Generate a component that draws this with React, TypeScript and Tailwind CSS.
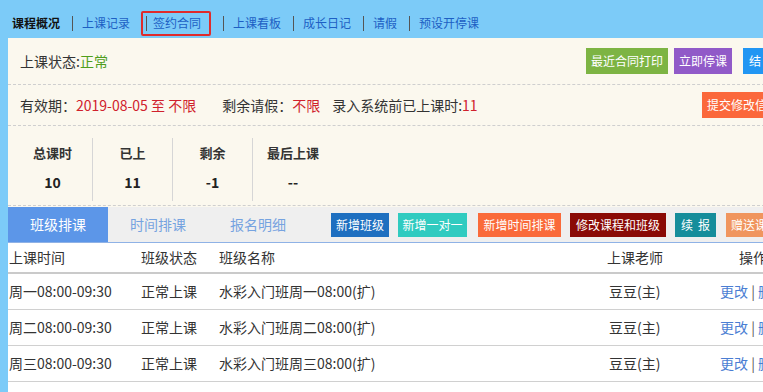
const navItems = ["上课记录", "签约合同", "上课看板", "成长日记", "请假", "预设开停课"];

const stats = [
  { label: "总课时", value: "10" },
  { label: "已上", value: "11" },
  { label: "剩余", value: "-1" },
  { label: "最后上课", value: "--" },
];

const rows = [
  { time: "周一08:00-09:30", name: "水彩入门班周一08:00(扩)" },
  { time: "周二08:00-09:30", name: "水彩入门班周二08:00(扩)" },
  { time: "周三08:00-09:30", name: "水彩入门班周三08:00(扩)" },
];

function Sep() {
  return <span className="w-px h-[15px] bg-[#555]" />;
}

export default function App() {
  return (
    <div
      className="w-[763px] h-[392px] overflow-hidden bg-[#7ccbf8] text-[#333]"
      style={{ fontFamily: '"Noto Sans CJK SC", "Noto Sans", sans-serif' }}
    >
      {/* NAV */}
      <div className="h-[38px] pt-[8px] flex items-center pl-[12px] text-[12px]">
        <span className="font-bold text-[#111]">课程概况</span>
        {navItems.map((item) =>
          item === "签约合同" ? (
            <span
              key={item}
              className="ml-[11px] h-[25px] flex items-center border-2 border-[#e02b2b] rounded-[2px] pl-[3px] pr-[8px]"
            >
              <Sep />
              <span className="ml-[6px] text-[#1d5fc4]">{item}</span>
            </span>
          ) : (
            <span key={item} className="flex items-center">
              <span className="ml-[12px]" />
              <Sep />
              <span className="ml-[9px] text-[#1d5fc4]">{item}</span>
            </span>
          )
        )}
      </div>

      {/* PANEL */}
      <div className="ml-[8px] w-[782px] bg-[#fbf8ee]">
        {/* STATUS */}
        <div className="h-[47px] flex items-center pl-[12px] pr-[6px] border-b border-dashed border-[#cfcfcf] text-[14px]">
          <span>
            上课状态:<span className="text-[#4f9e1c]">正常</span>
          </span>
          <div className="ml-auto flex items-center text-[12px] text-white">
            <span className="h-[26px] px-[5px] flex items-center bg-[#7db443]">最近合同打印</span>
            <span className="ml-[6px] h-[26px] px-[5px] flex items-center bg-[#915ac8]">立即停课</span>
            <span className="ml-[11px] h-[26px] w-[41px] flex items-center justify-center gap-[5px] bg-[#2196f3]">
              <span>结</span>
              <span>课</span>
            </span>
          </div>
        </div>

        {/* DATES */}
        <div className="h-[41px] flex items-center pl-[12px] pr-[6px] border-b border-dashed border-[#cfcfcf] text-[14px]">
          <span>
            有效期：<span className="text-[#d0212c]">2019-08-05 至 不限</span>
          </span>
          <span className="ml-[26px]">
            剩余请假：<span className="text-[#d0212c]">不限</span>
          </span>
          <span className="ml-[12px]">
            录入系统前已上课时:<span className="text-[#d0212c]">11</span>
          </span>
          <span className="ml-auto h-[26px] w-[82px] flex items-center justify-center bg-[#fb683b] text-white text-[12px]">
            提交修改信息
          </span>
        </div>

        {/* STATS */}
        <div className="h-[80px] pl-[5px] pt-[12px] flex border-b border-dashed border-[#cfcfcf]">
          {stats.map((s, i) => (
            <div
              key={s.label}
              className={
                "w-[80px] h-[63px] flex flex-col items-center font-bold " +
                (i < stats.length - 1 ? "border-r border-[#d6d6d6]" : "")
              }
            >
              <span className="mt-[6px] text-[13px] leading-[18px]">{s.label}</span>
              <span className="mt-[11px] text-[14px] leading-[18px] text-[#222]">{s.value}</span>
            </div>
          ))}
        </div>

        {/* TABS */}
        <div className="mt-[1px] h-[36px] flex items-stretch bg-[#efefef] border-b border-[#8fb2e6] pr-[6px]">
          <span className="w-[100px] flex items-center justify-center bg-[#5c96e8] text-white text-[14px]">
            班级排课
          </span>
          <span className="w-[100px] flex items-center justify-center text-[#76a3e0] text-[14px]">
            时间排课
          </span>
          <span className="w-[100px] flex items-center justify-center text-[#76a3e0] text-[14px]">
            报名明细
          </span>
          <div className="ml-auto flex items-center gap-[9px] text-[12px] text-white">
            <span className="h-[24px] w-[58px] flex items-center justify-center bg-[#1e6fc0]">新增班级</span>
            <span className="h-[24px] w-[69px] flex items-center justify-center bg-[#30cbc0]">新增一对一</span>
            <span className="ml-[2px] h-[24px] w-[83px] flex items-center justify-center bg-[#fa6a3a]">新增时间排课</span>
            <span className="h-[24px] w-[96px] flex items-center justify-center bg-[#8a0a06]">修改课程和班级</span>
            <span className="h-[24px] w-[41px] flex items-center justify-center gap-[5px] bg-[#168d9b]">
              <span>续</span>
              <span>报</span>
            </span>
            <span className="ml-[1px] h-[24px] w-[58px] flex items-center justify-center bg-[#f0955e]">赠送课时</span>
          </div>
        </div>

        {/* TABLE */}
        <div className="bg-white text-[14px] pb-[12px]">
          <div className="h-[31px] grid grid-cols-[133px_78px_388px_100px_1fr] items-center border-b-2 border-[#cacaca]">
            <span className="pl-[1px]">上课时间</span>
            <span>班级状态</span>
            <span>班级名称</span>
            <span>上课老师</span>
            <span className="pl-[32px]">操作</span>
          </div>
          {rows.map((r) => (
            <div
              key={r.time}
              className="h-[36px] grid grid-cols-[133px_78px_388px_100px_1fr] items-center border-b border-[#d0d0d0]"
            >
              <span className="pl-[1px]">{r.time}</span>
              <span>正常上课</span>
              <span>{r.name}</span>
              <span className="pl-[2px]">豆豆(主)</span>
              <span className="pl-[13px] text-[#4a7ed3] whitespace-nowrap">
                更改 <span className="text-[#555]">|</span> 删除
              </span>
            </div>
          ))}
        </div>
      </div>
    </div>
  );
}
